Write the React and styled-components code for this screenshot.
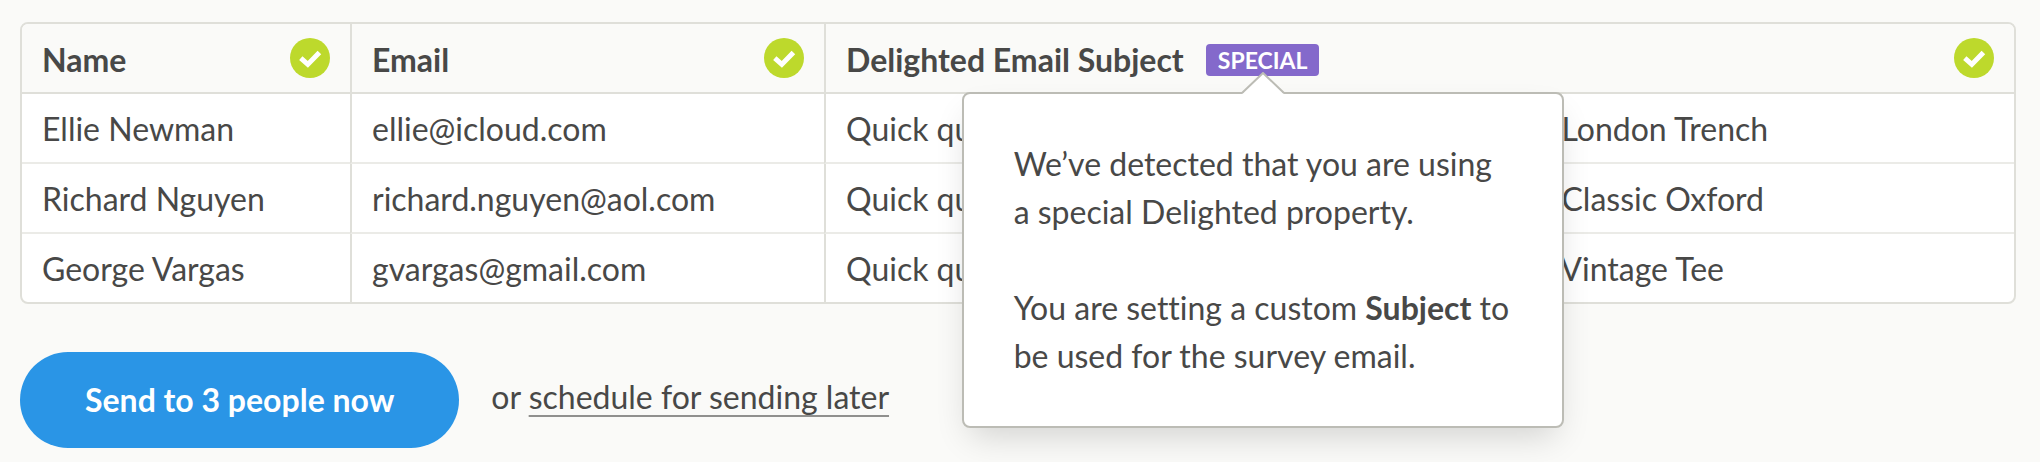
import styled, { createGlobalStyle } from 'styled-components';

const GlobalStyle = createGlobalStyle`
    * {
        box-sizing: border-box;
    }
    body {
        margin: 0;
        background: #fafaf8;
        color: #484847;
        font-family: Lato, sans-serif;
        font-size: 32px;
        font-variant-ligatures: none;
        line-height: 48px;
    }
`;

const Page = styled.main`
    padding: 22px 24px 14px 20px;
`;

const Table = styled.table`
    width: 100%;
    table-layout: fixed;
    border: 2px solid #dfdfd9;
    border-radius: 8px;
    border-spacing: 0;
    background: #ffffff;
`;

const Column = styled.col`
    width: ${ props => props.$width ? props.$width + 'px' : 'auto' };
`;

const HeadCell = styled.th`
    height: 70px;
    padding: 0 20px;
    border-bottom: 2px solid #dfdfd9;
    background: #fafaf8;
    font-weight: 700;
    text-align: left;
    &:first-child {
        border-top-left-radius: 6px;
    }
    &:last-child {
        border-top-right-radius: 6px;
    }
    & + & {
        border-left: 2px solid #dfdfd9;
    }
`;

const HeadContent = styled.div`
    display: flex;
    align-items: center;
    justify-content: space-between;
    white-space: nowrap;
`;

const HeadLabel = styled.div`
    display: flex;
    align-items: center;
    gap: 22px;
    padding-top: 4px;
`;

const Cell = styled.td`
    height: 70px;
    padding: 2px 20px 0;
    border-bottom: 2px solid #ebebe7;
    white-space: nowrap;
    & + & {
        border-left: 2px solid #dfdfd9;
    }
    tr:last-child > & {
        height: 68px;
        border-bottom: 0;
    }
`;

const CheckIcon = styled.svg`
    display: block;
    flex: none;
    width: 40px;
    height: 40px;
`;

const Check = () => (
    <CheckIcon viewBox="0 0 40 40" role="img" aria-label="Column matched">
        <circle cx="20" cy="20" r="20" fill="#bdd92c"/>
        <path d="M10.8 20.2 L17.8 26.4 L29.4 14.4" fill="none" stroke="#ffffff" strokeWidth="5"/>
    </CheckIcon>
);

const Special = styled.span`
    position: relative;
    display: inline-block;
`;

const Badge = styled.span`
    display: block;
    padding: 0 12px;
    border-radius: 4px;
    background: #8469cb;
    color: #ffffff;
    font-size: 23px;
    line-height: 32px;
`;

const PopoverStyled = styled.div`
    position: absolute;
    z-index: 10;
    top: 48px;
    left: 50%;
    width: 602px;
    padding: 46px 50px;
    border: 2px solid #bcbcb5;
    border-radius: 8px;
    background: #ffffff;
    box-shadow: 0 16px 32px -8px rgba( 0, 0, 0, 0.16 );
    font-weight: 400;
    white-space: normal;
    transform: translateX( -50% );
    p {
        margin: 0;
    }
    p + p {
        margin-top: 48px;
    }
    strong {
        font-weight: 700;
    }
`;

const Arrow = styled.svg`
    position: absolute;
    bottom: 100%;
    left: 50%;
    width: 44px;
    height: 22px;
    margin-left: -22px;
`;

const Popover = ( { children } ) => (
    <PopoverStyled role="tooltip">
        <Arrow viewBox="0 0 44 22" aria-hidden="true">
            <path d="M1 22 L22 1 L43 22 Z" fill="#ffffff"/>
            <path d="M1 21 L22 1 L43 21" fill="none" stroke="#bcbcb5" strokeWidth="2"/>
        </Arrow>
        { children }
    </PopoverStyled>
);

const Actions = styled.div`
    display: flex;
    align-items: center;
    gap: 32px;
    margin-top: 48px;
`;

const SendButton = styled.button`
    height: 96px;
    padding: 0 65px;
    border: 0;
    border-radius: 48px;
    background: #2a95e6;
    color: #ffffff;
    font: inherit;
    font-weight: 700;
    white-space: nowrap;
`;

const Later = styled.p`
    margin: 0;
    padding-bottom: 6px;
`;

const LaterLink = styled.a`
    color: inherit;
    text-decoration: underline 2px #90908e;
    text-decoration-skip-ink: none;
    text-underline-offset: 6px;
`;

const people = [
    { name: 'Ellie Newman', email: 'ellie@icloud.com', item: 'London Trench' },
    { name: 'Richard Nguyen', email: 'richard.nguyen@aol.com', item: 'Classic Oxford' },
    { name: 'George Vargas', email: 'gvargas@gmail.com', item: 'Vintage Tee' },
];

const App = () => (
    <Page>
        <GlobalStyle/>
        <Table>
            <colgroup>
                <Column $width={ 328 }/>
                <Column $width={ 474 }/>
                <Column/>
            </colgroup>
            <thead>
                <tr>
                    <HeadCell scope="col">
                        <HeadContent>
                            <HeadLabel>Name</HeadLabel>
                            <Check/>
                        </HeadContent>
                    </HeadCell>
                    <HeadCell scope="col">
                        <HeadContent>
                            <HeadLabel>Email</HeadLabel>
                            <Check/>
                        </HeadContent>
                    </HeadCell>
                    <HeadCell scope="col">
                        <HeadContent>
                            <HeadLabel>
                                Delighted Email Subject
                                <Special>
                                    <Badge>SPECIAL</Badge>
                                    <Popover>
                                        <p>We’ve detected that you are using a special Delighted property.</p>
                                        <p>You are setting a custom <strong>Subject</strong> to be used for the survey email.</p>
                                    </Popover>
                                </Special>
                            </HeadLabel>
                            <Check/>
                        </HeadContent>
                    </HeadCell>
                </tr>
            </thead>
            <tbody>
                { people.map( person => (
                    <tr key={ person.email }>
                        <Cell>{ person.name }</Cell>
                        <Cell>{ person.email }</Cell>
                        <Cell>Quick question about your experience wearing the { person.item }</Cell>
                    </tr>
                ) ) }
            </tbody>
        </Table>
        <Actions>
            <SendButton type="button">Send to { people.length } people now</SendButton>
            <Later>or <LaterLink href="#schedule">schedule for sending later</LaterLink></Later>
        </Actions>
    </Page>
);

export default App;
